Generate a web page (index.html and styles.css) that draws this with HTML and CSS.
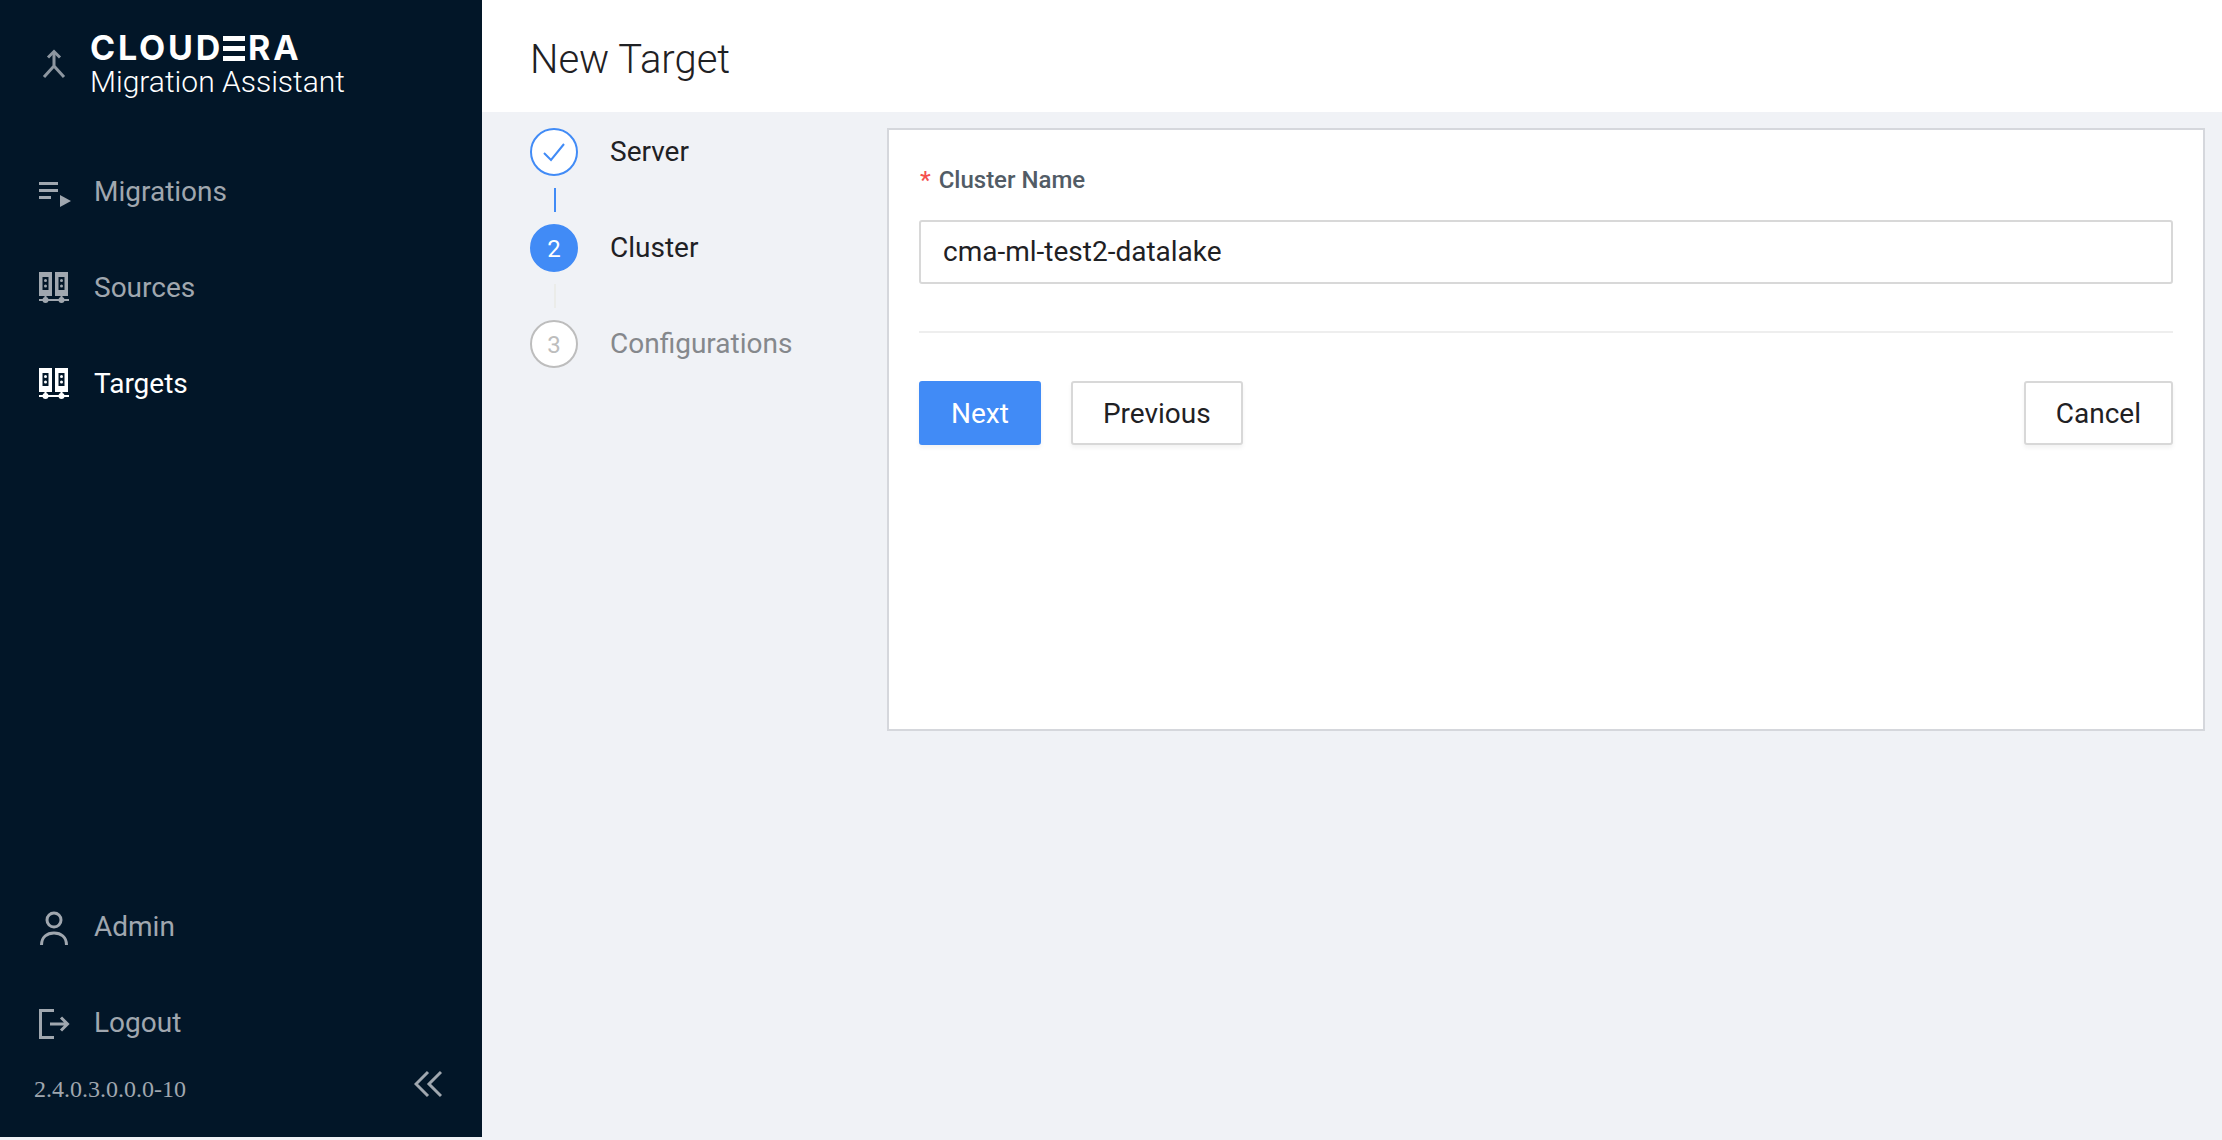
FILE: index.html
```html
<!DOCTYPE html>
<html lang="en">

<head>
    <meta charset="UTF-8">
    <title>New Target</title>
    <link rel="stylesheet" href="styles.css">
</head>

<body>
    <aside class="sidebar">
        <div class="brand">
            <svg class="brand-icon" viewBox="0 0 24 30" fill="none" stroke="#8d96a0" stroke-width="3">
                <path d="M12 3V17L2 28M12 17L22 28"/>
                <path d="M6 8.500L12 2.500L18 8.500"/>
            </svg>
            <div class="brand-text">
                <div class="brand-logo">CLOUD<span class="logo-e">E</span>RA</div>
                <div class="brand-name">Migration Assistant</div>
            </div>
        </div>

        <nav class="nav">
            <a class="nav-item">
                <svg class="nav-icon" viewBox="0 0 32 32" fill="currentColor">
                    <rect x="1" y="7" width="19" height="3"/>
                    <rect x="1" y="14" width="19" height="3"/>
                    <rect x="1" y="21" width="12" height="3"/>
                    <path d="M22 20L33 26L22 32Z"/>
                </svg>
                Migrations
            </a>
            <a class="nav-item">
                <svg class="nav-icon" viewBox="0 0 32 32" fill="currentColor">
                    <path fill-rule="evenodd" d="M1 1H14V25H1ZM4.500 6V19H10.500V6ZM17 1H30V25H17ZM20.500 6V19H26.500V6Z"/>
                    <circle cx="7.500" cy="9.500" r="1.500"/>
                    <circle cx="7.500" cy="15" r="1.500"/>
                    <circle cx="23.500" cy="9.500" r="1.500"/>
                    <circle cx="23.500" cy="15" r="1.500"/>
                    <path d="M6.500 25H8.500V28H22.500V25H24.500V28H31V30H1V28H6.500Z"/>
                    <circle cx="7.500" cy="29" r="3"/>
                    <circle cx="23.500" cy="29" r="3"/>
                </svg>
                Sources
            </a>
            <a class="nav-item active">
                <svg class="nav-icon" viewBox="0 0 32 32" fill="currentColor">
                    <path fill-rule="evenodd" d="M1 1H14V25H1ZM4.500 6V19H10.500V6ZM17 1H30V25H17ZM20.500 6V19H26.500V6Z"/>
                    <circle cx="7.500" cy="9.500" r="1.500"/>
                    <circle cx="7.500" cy="15" r="1.500"/>
                    <circle cx="23.500" cy="9.500" r="1.500"/>
                    <circle cx="23.500" cy="15" r="1.500"/>
                    <path d="M6.500 25H8.500V28H22.500V25H24.500V28H31V30H1V28H6.500Z"/>
                    <circle cx="7.500" cy="29" r="3"/>
                    <circle cx="23.500" cy="29" r="3"/>
                </svg>
                Targets
            </a>
        </nav>

        <nav class="nav nav-bottom">
            <a class="nav-item">
                <svg class="nav-icon" viewBox="0 0 32 32" fill="none" stroke="currentColor" stroke-width="3">
                    <circle cx="16" cy="10" r="7"/>
                    <path d="M3.500 35C3.500 27 9 23 16 23C23 23 28.500 27 28.500 35"/>
                </svg>
                Admin
            </a>
            <a class="nav-item">
                <svg class="nav-icon" viewBox="0 0 32 32" fill="none" stroke="currentColor" stroke-width="3">
                    <path d="M16 4.500H2.500V31.500H16"/>
                    <path d="M12 18H29M23 11.500L29.500 18L23 24.500"/>
                </svg>
                Logout
            </a>
        </nav>

        <div class="version-row">
            <span class="version">2.4.0.3.0.0.0-10</span>
            <svg class="collapse" viewBox="0 0 28 28" fill="none" stroke="currentColor" stroke-width="3">
                <path d="M14 2L2 14L14 26M27 2L15 14L27 26"/>
            </svg>
        </div>
    </aside>

    <main class="main">
        <header class="page-header">New Target</header>

        <div class="content">
            <ol class="steps">
                <li class="step done">
                    <span class="step-circle">
                        <svg class="check" viewBox="0 0 22 19" fill="none" stroke="currentColor" stroke-width="2">
                            <path d="M1 10L8 17L21 1"/>
                        </svg>
                    </span>
                    <span class="step-label">Server</span>
                </li>
                <li class="step current">
                    <span class="step-circle">2</span>
                    <span class="step-label">Cluster</span>
                </li>
                <li class="step todo">
                    <span class="step-circle">3</span>
                    <span class="step-label">Configurations</span>
                </li>
            </ol>

            <section class="card">
                <label class="field-label"><span class="required">*</span>Cluster Name</label>
                <input class="field-input" type="text" value="cma-ml-test2-datalake">
                <hr class="divider">
                <div class="actions">
                    <button class="btn btn-primary">Next</button>
                    <button class="btn">Previous</button>
                    <button class="btn btn-cancel">Cancel</button>
                </div>
            </section>
        </div>
    </main>
</body>

</html>
```

FILE: styles.css
```css
* {
    box-sizing: border-box;
}

html,
body {
    height: 100%;
}

body {
    margin: 0;
    display: flex;
    align-items: flex-start;
    overflow: hidden;
    background: #f0f2f6;
    color: #1f2124;
    font-family: Roboto, sans-serif;
    font-size: 28px;
}

/* sidebar */
.sidebar {
    flex: 0 0 482px;
    height: 1137px;
    display: flex;
    flex-direction: column;
    background: #021628;
    color: #a0a7af;
}

.brand {
    height: 143px;
    padding: 34px 0 0 42px;
    display: flex;
    align-items: flex-start;
    color: #fff;
}

.brand-icon {
    width: 24px;
    height: 30px;
    margin-top: 15px;
}

.brand-text {
    margin-left: 24px;
}

.brand-logo {
    height: 28px;
    font-family: Inter, sans-serif;
    font-size: 34px;
    font-weight: 700;
    line-height: 28px;
    letter-spacing: 2.8px;
    white-space: nowrap;
}

.logo-e {
    display: inline-block;
    width: 22px;
    height: 25px;
    margin: 0 3px 0 0;
    color: transparent;
    vertical-align: -1px;
    line-height: 25px;
    background: linear-gradient(#fff 5px, transparent 5px 10px, #fff 10px 15px, transparent 15px 20px, #fff 20px);
}

.brand-name {
    font-size: 30px;
    font-weight: 300;
    line-height: 38px;
    margin-top: 1px;
}

.nav-item {
    height: 96px;
    padding-left: 38px;
    display: flex;
    align-items: center;
    gap: 24px;
}

.nav-item.active {
    color: #fff;
}

.nav-icon {
    flex: 0 0 32px;
    width: 32px;
    height: 32px;
    overflow: visible;
}

.nav-bottom {
    margin-top: auto;
}

.version-row {
    height: 67px;
    padding: 0 40px 0 34px;
    display: flex;
    align-items: flex-start;
    justify-content: space-between;
}

.version {
    margin-top: 4px;
    font-family: "Liberation Serif", serif;
    font-size: 24px;
    line-height: 30px;
}

.collapse {
    width: 28px;
    height: 28px;
}

/* main */
.main {
    flex: 1;
    min-width: 0;
}

.page-header {
    height: 112px;
    padding: 6px 48px 0;
    display: flex;
    align-items: center;
    background: #fff;
    font-size: 40px;
    font-weight: 300;
}

.content {
    padding: 16px 17px 0 48px;
    display: flex;
    align-items: flex-start;
}

.steps {
    flex: 0 0 357px;
    margin: 0;
    padding: 0;
    list-style: none;
}

.step {
    position: relative;
    height: 96px;
    display: flex;
    align-items: flex-start;
    gap: 32px;
}

.step-circle {
    width: 48px;
    height: 48px;
    padding-top: 2px;
    display: flex;
    align-items: center;
    justify-content: center;
    border-radius: 50%;
    border: 2px solid #bdbdbd;
    background: #fff;
    font-size: 24px;
}

.step-label {
    margin-top: 6px;
    line-height: 36px;
}

/* connector between two steps */
.step:not(:last-child)::after {
    content: "";
    position: absolute;
    left: 24px;
    top: 60px;
    width: 2px;
    height: 24px;
    background: #ebece9;
}

.step.done::after {
    background: #418bf6;
}

.step.done .step-circle {
    padding-top: 0;
    border-color: #418bf6;
    color: #418bf6;
}

.check {
    width: 22px;
    height: 19px;
}

.step.current .step-circle {
    border-color: #418bf6;
    background: #418bf6;
    color: #fff;
}

.step.todo .step-circle {
    color: #bdbdbd;
}

.step.todo .step-label {
    color: #85888c;
}

.card {
    flex: 1;
    height: 603px;
    padding: 35px 30px 0 30px;
    background: #fff;
    border: 2px solid #d5d7dc;
}

.field-label {
    display: block;
    height: 55px;
    padding-left: 1px;
    color: #525c66;
    font-size: 24px;
    font-weight: 500;
    line-height: 30px;
}

.required {
    margin-right: 8px;
    color: #f5504e;
}

.field-input {
    display: block;
    width: 100%;
    height: 64px;
    padding: 0 22px 2px;
    border: 2px solid #d8d8d8;
    border-radius: 3px;
    outline: none;
    color: #1f2124;
    font-family: Roboto, sans-serif;
    font-size: 28px;
}

.divider {
    height: 2px;
    margin: 47px 0 48px;
    border: 0;
    background: #eeeeee;
}

.actions {
    display: flex;
    gap: 30px;
}

.btn {
    height: 64px;
    padding: 0 30px;
    border: 2px solid #d8d8d8;
    border-radius: 3px;
    background: #fff;
    box-shadow: 0 3px 4px rgba(0, 0, 0, 0.05);
    color: #1f2124;
    font-family: Roboto, sans-serif;
    font-size: 28px;
}

.btn-primary {
    border-color: #418bf6;
    background: #418bf6;
    color: #fff;
}

.btn-cancel {
    margin-left: auto;
}
```
